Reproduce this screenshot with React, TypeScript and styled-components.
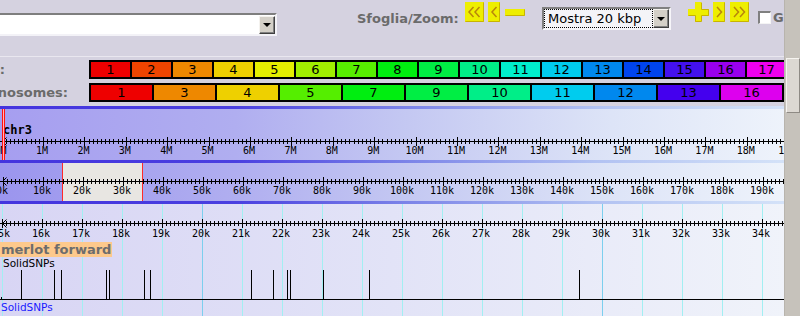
import React from 'react';
import styled, { createGlobalStyle } from 'styled-components';

const GlobalStyle = createGlobalStyle`
  html, body {
    margin: 0;
    padding: 0;
    overflow: hidden;
  }
  body {
    background: #d5d2e0;
    font-family: 'DejaVu Sans', Verdana, sans-serif;
  }
`;

const Page = styled.div`
  display: flex;
  width: 800px;
  height: 316px;
  overflow: hidden;
`;

const Main = styled.div`
  width: 784px;
  flex-shrink: 0;
  display: flex;
  flex-direction: column;
  overflow: hidden;
`;

const Scrollbar = styled.div`
  width: 16px;
  flex-shrink: 0;
  box-sizing: border-box;
  padding: 58px 0 0 1px;
  background: #c6c2bb;
  border-left: 1px solid #b8b4ad;
`;

const Thumb = styled.div`
  height: 55px;
  box-sizing: border-box;
  background: #dcd8d2;
  border-top: 1px solid #f6f4f0;
  border-left: 1px solid #f6f4f0;
  border-right: 1px solid #8e8a84;
  border-bottom: 1px solid #8e8a84;
`;

/* ---------- toolbar ---------- */

const Toolbar = styled.div`
  height: 56px;
  flex-shrink: 0;
  display: flex;
  align-items: flex-start;
  border-bottom: 1px solid #e9e7ef;
`;

const SourceSelect = styled.div`
  margin-top: 13px;
  width: 277px;
  height: 23px;
  flex-shrink: 0;
  box-sizing: border-box;
  padding-top: 1px;
  background: #fff;
  border-top: 2px solid #7e7e7e;
  border-right: 2px solid #f3f2f7;
  border-bottom: 2px solid #f3f2f7;
  display: flex;
  justify-content: flex-end;
  align-items: flex-start;
`;

const DropButton = styled.div<{ $height: number }>`
  width: 16px;
  height: ${(p) => p.$height}px;
  flex-shrink: 0;
  box-sizing: border-box;
  background: #d4d0c8;
  border-top: 1px solid #f4f2ee;
  border-left: 1px solid #f4f2ee;
  border-right: 1px solid #404040;
  border-bottom: 1px solid #404040;
  box-shadow: inset -1px -1px 0 #808080;
  display: flex;
  align-items: center;
  justify-content: center;
  &::after {
    content: '';
    width: 0;
    height: 0;
    border-left: 4px solid transparent;
    border-right: 4px solid transparent;
    border-top: 4px solid #000;
  }
`;

const ZoomLabel = styled.div`
  width: 108px;
  flex-shrink: 0;
  margin: 11px 0 0 80px;
  font-size: 13px;
  line-height: 15px;
  font-weight: bold;
  color: #6b6b6b;
  white-space: nowrap;
`;

const ImageButton = styled.svg<{ $top: number; $gap: number }>`
  display: block;
  flex-shrink: 0;
  margin-top: ${(p) => p.$top}px;
  margin-left: ${(p) => p.$gap}px;
`;

const ZoomSelect = styled.div`
  margin: 7px 0 0 17px;
  width: 129px;
  height: 23px;
  flex-shrink: 0;
  box-sizing: border-box;
  background: #fff;
  border-top: 2px solid #808080;
  border-left: 2px solid #808080;
  border-right: 2px solid #f6f5f9;
  border-bottom: 2px solid #f6f5f9;
  display: flex;
  align-items: flex-start;
`;

const SelectValue = styled.div`
  flex: 1;
  height: 19px;
  box-sizing: border-box;
  padding-left: 4px;
  outline: 1px dotted #000;
  outline-offset: -1px;
  background: #f4f4f8;
  font-size: 13px;
  line-height: 19px;
  color: #000;
  white-space: nowrap;
`;

const Checkbox = styled.div`
  margin: 11px 0 0 9px;
  width: 13px;
  height: 13px;
  flex-shrink: 0;
  box-sizing: border-box;
  background: #fff;
  border-top: 2px solid #808080;
  border-left: 2px solid #808080;
  border-right: 1px solid #f4f4f4;
  border-bottom: 1px solid #f4f4f4;
`;

const CheckLabel = styled.div`
  margin: 10px 0 0 2px;
  font-size: 13px;
  line-height: 15px;
  font-weight: bold;
  color: #6b6b6b;
`;

const YELLOW = '#eeee00';
const EDGE = '#c8b400';
const GLYPH = '#b8860b';

const ArrowButton = ({ dir, double, gap }: { dir: 'left' | 'right'; double?: boolean; gap: number }) => {
  const w = double ? 19 : 12;
  const h = 20;
  const chevron = (x: number) =>
    dir === 'left'
      ? `M${x + 4.5} 5 L${x} 10 L${x + 4.5} 15`
      : `M${x} 5 L${x + 4.5} 10 L${x} 15`;
  const d = double ? `${chevron(4)} ${chevron(10)}` : chevron(4);
  return (
    <ImageButton width={w} height={h} $top={2} $gap={gap}>
      <rect x={0} y={0} width={w} height={h} fill={YELLOW} />
      <path d={`M0.5 ${h - 0.5} H${w - 0.5} V0.5`} stroke={EDGE} fill="none" />
      <path d={d} stroke={GLYPH} strokeWidth={1.5} fill="none" />
    </ImageButton>
  );
};

const MinusButton = ({ gap }: { gap: number }) => (
  <ImageButton width={20} height={7} $top={9} $gap={gap}>
    <rect x={0} y={0} width={20} height={7} fill={YELLOW} />
    <path d="M0.5 6.5 H19.5 V0.5" stroke={EDGE} fill="none" />
  </ImageButton>
);

const PlusButton = ({ gap }: { gap: number }) => (
  <ImageButton width={21} height={20} $top={2} $gap={gap}>
    <polygon
      points="7,0 13,0 13,7 21,7 21,14 13,14 13,20 7,20 7,14 0,14 0,7 7,7"
      fill={YELLOW}
    />
    <path d="M13.5 0.5 V7.5 H20.5 V13.5 H13.5 V19.5 H7.5 V13.5 H0.5" stroke={EDGE} fill="none" />
  </ImageButton>
);

/* ---------- chromosome strips ---------- */

const ChromRow = styled.div<{ $top: number }>`
  display: flex;
  flex-shrink: 0;
  margin-top: ${(p) => p.$top}px;
  height: 19px;
`;

const RowLabel = styled.div<{ $width: number }>`
  width: ${(p) => p.$width}px;
  margin-right: ${(p) => 89 - p.$width}px;
  flex-shrink: 0;
  display: flex;
  justify-content: flex-end;
  align-items: center;
  white-space: nowrap;
  font-size: 13px;
  font-weight: bold;
  color: #6b6b6b;
`;

const Strip = styled.div`
  display: flex;
  flex-shrink: 0;
  gap: 2px;
  padding: 2px;
  background: #000;
`;

const ChromCell = styled.div<{ $color: string; $width: number }>`
  width: ${(p) => p.$width}px;
  height: 15px;
  flex-shrink: 0;
  background: ${(p) => p.$color};
  display: flex;
  align-items: center;
  justify-content: center;
  font-size: 13px;
  color: #000;
`;

const firstSet: [string, string][] = [
  ['1', '#ee0000'],
  ['2', '#ee4400'],
  ['3', '#ee8800'],
  ['4', '#eed000'],
  ['5', '#e4ee00'],
  ['6', '#a0ee00'],
  ['7', '#58ee00'],
  ['8', '#00ee10'],
  ['9', '#00ee44'],
  ['10', '#00ee88'],
  ['11', '#00eecc'],
  ['12', '#00ccee'],
  ['13', '#0088ee'],
  ['14', '#0044ee'],
  ['15', '#4411ee'],
  ['16', '#9900ee'],
  ['17', '#ee00ee'],
];

const secondSet: [string, string][] = [
  ['1', '#ee0000'],
  ['3', '#ee8800'],
  ['4', '#eed000'],
  ['5', '#55ee00'],
  ['7', '#00ee10'],
  ['9', '#00ee44'],
  ['10', '#00ee88'],
  ['11', '#00ccee'],
  ['12', '#0088ee'],
  ['13', '#4400ee'],
  ['16', '#dd00ee'],
  ['', '#ee0022'],
];

/* ---------- panels ---------- */

const PanelBar = styled.div<{ $top?: number }>`
  height: 3px;
  flex-shrink: 0;
  margin-top: ${(p) => p.$top || 0}px;
  background: linear-gradient(90deg, #4434de 0%, #4a3fe0 30%, #7c84e8 52%, #b2c2f2 76%, #d4e2f8 100%);
`;

const PanelBody = styled.div<{ $height: number; $left: string }>`
  height: ${(p) => p.$height}px;
  flex-shrink: 0;
  background: linear-gradient(90deg, ${(p) => p.$left} 0%, #b0aef0 30%, #c4c8f2 52%, #dde4f7 78%, #eef3fb 100%);
`;

const DetailPanel = styled.div`
  flex: 1;
  display: flex;
  flex-direction: column;
  align-items: flex-start;
  background:
    repeating-linear-gradient(90deg, transparent 0 202px, #7ccfee 202px 203px, transparent 203px 400px),
    repeating-linear-gradient(90deg, transparent 0 2px, #a2eff2 2px 3px, transparent 3px 40px),
    linear-gradient(90deg, #d8d5f4 0%, #e2e3f7 50%, #f0f3fa 100%);
`;

const Drawing = styled.svg`
  display: block;
  flex-shrink: 0;
  text {
    font-family: 'DejaVu Sans Mono', 'Liberation Mono', monospace;
    font-size: 10px;
    fill: #000;
  }
  .chrom {
    font-weight: bold;
    font-size: 12px;
  }
`;

const TrackTitle = styled.div`
  height: 15px;
  padding: 0 1px;
  background: #fdc98c;
  color: #6d6d6d;
  font-size: 13px;
  font-weight: bold;
  line-height: 15px;
  white-space: nowrap;
`;

const TrackCaption = styled.div<{ $color: string; $indent: number }>`
  height: 12px;
  padding-left: ${(p) => p.$indent}px;
  font-size: 10.5px;
  line-height: 12px;
  color: ${(p) => p.$color};
  white-space: nowrap;
`;

const WIDTH = 784;

interface RulerProps {
  height: number;
  lineY: number;
  labelY: number;
  origin: number;
  pitch: number;
  label: (i: number) => string;
  underlay?: React.ReactNode;
  overlay?: React.ReactNode;
}

const Ruler = ({ height, lineY, labelY, origin, pitch, label, underlay, overlay }: RulerProps) => {
  let d = `M0 ${lineY} H${WIDTH} M6.5 ${lineY - 4} L2.5 ${lineY} L6.5 ${lineY + 4}`;
  const labels: { x: number; text: string }[] = [];
  for (let i = 0; ; i++) {
    const x = origin + (pitch * i) / 10;
    if (x > WIDTH + 8) break;
    const px = Math.round(x) + 0.5;
    const major = i % 10 === 0;
    const h = major ? 4.5 : 2.5;
    if (x <= WIDTH) d += ` M${px} ${lineY - h} V${lineY + h}`;
    if (major) labels.push({ x: x - 1, text: label(i / 10) });
  }
  return (
    <Drawing width={WIDTH} height={height}>
      {underlay}
      <path d={d} stroke="#000" strokeWidth={1} fill="none" />
      {labels.map((l) => (
        <text key={l.text} x={l.x} y={labelY} textAnchor="middle">
          {l.text}
        </text>
      ))}
      {overlay}
    </Drawing>
  );
};

const snps = [21, 54, 61, 106, 109, 144, 150, 251, 273, 287, 290, 323, 369, 579];

const SnpTrack = () => (
  <Drawing width={WIDTH} height={32}>
    <path d={`M0 30.5 H${WIDTH} M1.5 28 V31`} stroke="#000" fill="none" />
    {snps.map((x) => (
      <line key={x} x1={x + 0.5} x2={x + 0.5} y1={1} y2={30} stroke="#000" />
    ))}
  </Drawing>
);

export default function App() {
  return (
    <Page>
      <GlobalStyle />
      <Main>
        <Toolbar>
          <SourceSelect>
            <DropButton $height={18} />
          </SourceSelect>
          <ZoomLabel>Sfoglia/Zoom:</ZoomLabel>
          <ArrowButton dir="left" double gap={0} />
          <ArrowButton dir="left" gap={4} />
          <MinusButton gap={5} />
          <ZoomSelect>
            <SelectValue>Mostra 20 kbp</SelectValue>
            <DropButton $height={19} />
          </ZoomSelect>
          <PlusButton gap={17} />
          <ArrowButton dir="right" gap={4} />
          <ArrowButton dir="right" double gap={5} />
          <Checkbox />
          <CheckLabel>G</CheckLabel>
        </Toolbar>

        <ChromRow $top={3}>
          <RowLabel $width={5}>:</RowLabel>
          <Strip>
            {firstSet.map(([name, color]) => (
              <ChromCell key={name} $color={color} $width={39}>
                {name}
              </ChromCell>
            ))}
          </Strip>
        </ChromRow>
        <ChromRow $top={4}>
          <RowLabel $width={68}>nosomes:</RowLabel>
          <Strip>
            {secondSet.map(([name, color], i) => (
              <ChromCell key={i} $color={color} $width={61}>
                {name}
              </ChromCell>
            ))}
          </Strip>
        </ChromRow>

        <PanelBar $top={4} />
        <PanelBody $height={51} $left="#a69ef0">
          <Ruler
            height={51}
            lineY={32.5}
            labelY={45}
            origin={1.6}
            pitch={41.4}
            label={(i) => `${i}M`}
            overlay={
              <>
                <text className="chrom" x={3} y={25}>
                  chr3
                </text>
                <rect x={2} y={0} width={3} height={51} fill="#ffb4bc" />
                <path d="M2.5 0 V51 M4.5 0 V51" stroke="#ff1010" />
              </>
            }
          />
        </PanelBody>
        <PanelBar />
        <PanelBody $height={38} $left="#9b95ee">
          <Ruler
            height={38}
            lineY={18.5}
            labelY={31}
            origin={3}
            pitch={40}
            label={(i) => `${i * 10}k`}
            underlay={
              <>
                <rect x={62} y={0} width={80} height={38} fill="#e8e6e2" />
                <path d="M62.5 0 V38 M142.5 0 V38" stroke="#ff2a2a" />
              </>
            }
          />
        </PanelBody>
        <PanelBar />

        <DetailPanel>
          <Ruler
            height={38}
            lineY={19.5}
            labelY={33}
            origin={2}
            pitch={40}
            label={(i) => `${15 + i}k`}
          />
          <TrackTitle>merlot forward</TrackTitle>
          <TrackCaption $color="#000" $indent={3}>
            SolidSNPs
          </TrackCaption>
          <SnpTrack />
          <TrackCaption $color="#1a1aff" $indent={1}>
            SolidSNPs
          </TrackCaption>
        </DetailPanel>
      </Main>
      <Scrollbar>
        <Thumb />
      </Scrollbar>
    </Page>
  );
}
